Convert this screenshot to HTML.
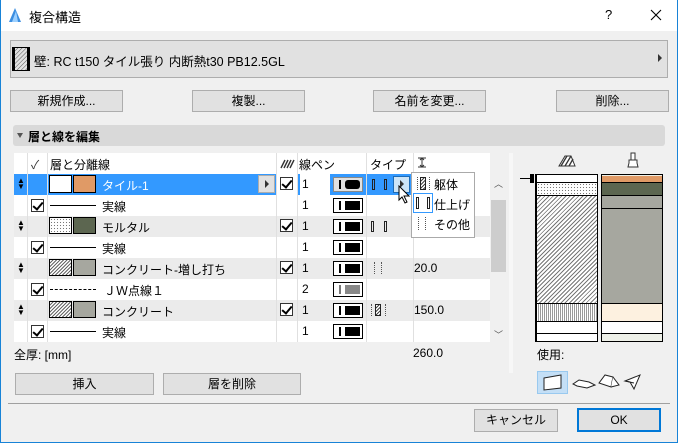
<!DOCTYPE html>
<html><head><meta charset="utf-8"><style>
*{box-sizing:border-box;margin:0;padding:0}
body{width:678px;height:443px;overflow:hidden;background:#f0f0f0;font-family:"Liberation Sans","Noto Sans CJK JP",sans-serif;font-size:12px;color:#000;position:relative}
.a{position:absolute}
.btn{position:absolute;background:#e1e1e1;border:1px solid #adadad;text-align:center;line-height:20px;font-size:12px}
.row{position:absolute;left:14px;width:476px;height:21px}
.g{background:#ebebeb}.w{background:#fff}
.cb{position:absolute;width:13px;height:13px;border:1px solid #333;background:#fff}
.cb::after{content:"";position:absolute;left:3px;top:0px;width:4px;height:8px;border:solid #000;border-width:0 2px 2px 0;transform:rotate(40deg)}
.sw{position:absolute;width:30px;height:15px;border:1px solid #000;background:#fff}
.sw i{position:absolute;left:5px;top:2px;width:2px;height:9px;background:#000}
.sw b{position:absolute;left:11px;top:2px;width:15px;height:9px;background:#000}
.t{position:absolute;top:3px}
.pat{position:absolute;width:23px;height:17px;border:1px solid #000}
.col{position:absolute;width:23px;height:17px;border:1px solid #000}
.mv{position:absolute;left:4px;top:4px;font-size:8px;line-height:6px}
</style></head><body>
<div class="a" style="left:0;top:0;width:678px;height:443px;border:1px solid #1883d7;border-top:none"></div>
<div class="a" style="left:1px;top:0;width:676px;height:31px;background:#fff"></div>
<svg class="a" style="left:8px;top:7px" width="14" height="16"><path d="M1 15 L7 1 L13 15 Z" fill="#3c8ee0"/><path d="M4 15 L8 4 L10 15Z" fill="#9cd0ff"/></svg>
<div class="a" style="left:29px;top:7px;font-size:13px">複合構造</div>
<div class="a" style="left:605px;top:7px;font-size:13px">?</div>
<svg class="a" style="left:650px;top:9px" width="12" height="12"><path d="M1 1L11 11M11 1L1 11" stroke="#000" stroke-width="1.1"/></svg>

<div class="a" style="left:10px;top:40px;width:658px;height:38px;background:#e1e1e1;border:1px solid #adadad"></div>
<svg class="a" style="left:11px;top:46px" width="20" height="26"><defs><pattern id="h" width="3" height="3" patternUnits="userSpaceOnUse" patternTransform="rotate(45)"><line x1="0" y1="0" x2="0" y2="3" stroke="#555" stroke-width="1"/></pattern></defs><rect x="1.5" y="1.5" width="17" height="23" fill="url(#h)" stroke="#000" stroke-width="1"/><rect x="1" y="1" width="3" height="24" fill="#000"/><rect x="16" y="1" width="3" height="24" fill="#000"/></svg>
<div class="a" style="left:34px;top:51px;font-size:12.5px">壁: RC t150 タイル張り 内断熱t30 PB12.5GL</div>
<div class="a" style="left:658px;top:54px;border-left:4px solid #333;border-top:4px solid transparent;border-bottom:4px solid transparent"></div>

<div class="btn" style="left:10px;top:90px;width:113px;height:22px">新規作成...</div>
<div class="btn" style="left:192px;top:90px;width:113px;height:22px">複製...</div>
<div class="btn" style="left:373px;top:90px;width:113px;height:22px">名前を変更...</div>
<div class="btn" style="left:556px;top:90px;width:113px;height:22px">削除...</div>

<div class="a" style="left:13px;top:125px;width:652px;height:21px;background:#d9d9d9;border-radius:3px"></div>
<div class="a" style="left:17px;top:133px;border-top:5px solid #555;border-left:3px solid transparent;border-right:3px solid transparent"></div>
<div class="a" style="left:28px;top:128px;font-weight:bold;font-size:12px">層と線を編集</div>

<div class="a" style="left:14px;top:153px;width:476px;height:21px;background:#fff"></div>
<div class="a" style="left:31px;top:156px;color:#333">✓</div>
<div class="a" style="left:50px;top:156px">層と分離線</div>
<svg class="a" style="left:280px;top:159px" width="15" height="10"><path d="M1 9L5 1M4 9L8 1M7 9L11 1M10 9L14 1" stroke="#333" stroke-width="1.4"/></svg>
<div class="a" style="left:299px;top:156px">線ペン</div>
<div class="a" style="left:370px;top:156px">タイプ</div>
<svg class="a" style="left:418px;top:157px" width="8" height="11"><path d="M0 1H8M0 10H8M4 1V10M2 3L4 1L6 3M2 8L4 10L6 8" stroke="#333" fill="none"/></svg>

<div class="row g" style="top:174px;background:#fff"></div>
<div class="a" style="left:14px;top:174px;width:262px;height:21px;background:#3399ff"></div>
<div class="a" style="left:298px;top:174px;width:2px;height:21px;background:#3399ff"></div>
<div class="a" style="left:330px;top:174px;width:83px;height:21px;background:#3399ff"></div>
<div class="row w" style="top:195px"></div>
<div class="row g" style="top:216px"></div>
<div class="row w" style="top:237px"></div>
<div class="row g" style="top:258px"></div>
<div class="row w" style="top:279px"></div>
<div class="row g" style="top:300px"></div>
<div class="row w" style="top:321px"></div>
<div class="a" style="left:27px;top:153px;width:1px;height:189px;background:#e0e0e0"></div>
<div class="a" style="left:47px;top:153px;width:1px;height:189px;background:#e0e0e0"></div>
<div class="a" style="left:276px;top:153px;width:1px;height:189px;background:#e0e0e0"></div>
<div class="a" style="left:297px;top:153px;width:1px;height:189px;background:#e0e0e0"></div>
<div class="a" style="left:366px;top:153px;width:1px;height:189px;background:#e0e0e0"></div>
<div class="a" style="left:413px;top:153px;width:1px;height:189px;background:#e0e0e0"></div>

<div class="mv" style="left:17px;top:178px;color:#000">▲<br>▼</div>
<div class="a" style="left:49px;top:175px;width:23px;height:18px;background:#fff;border:1px solid #000"></div>
<div class="col" style="left:73px;top:175px;height:18px;background:#e09a66"></div>
<div class="a" style="left:102px;top:177px;color:#fff">タイル-1</div>
<div class="a" style="left:258px;top:175px;width:17px;height:18px;background:#e1e1e1;border:1px solid #adadad"></div>
<div class="a" style="left:265px;top:180px;border-left:4px solid #333;border-top:4px solid transparent;border-bottom:4px solid transparent"></div>
<div class="cb" style="left:280px;top:177px"></div>
<div class="t" style="left:302px;top:177px">1</div>
<div class="sw" style="left:333px;top:177px;background:#e1e1e1;border-color:#888"><i></i><b style="border-radius:3px"></b></div>
<div class="a" style="left:372px;top:179px;width:3px;height:11px;border:1px solid #222"></div>
<div class="a" style="left:384px;top:179px;width:3px;height:11px;border:1px solid #222"></div>
<div class="a" style="left:393px;top:176px;width:17px;height:17px;background:#cce4f7;border:1px solid #1d6bb5"></div>
<div class="a" style="left:400px;top:180px;border-left:4px solid #333;border-top:4px solid transparent;border-bottom:4px solid transparent"></div>
<svg class="a" style="left:398px;top:185px" width="13" height="19"><path d="M1 1L1 15L4 12L7 18L9 17L6 11L11 11Z" fill="#fff" stroke="#000" stroke-width="1"/></svg>

<div class="cb" style="left:31px;top:199px"></div>
<div class="a" style="left:50px;top:205px;width:46px;height:1px;background:#000"></div>
<div class="t" style="left:102px;top:198px">実線</div>
<div class="t" style="left:302px;top:198px">1</div>
<div class="sw" style="left:333px;top:198px"><i></i><b></b></div>
<div class="mv" style="left:17px;top:220px">▲<br>▼</div>
<div class="pat" style="left:49px;top:217px;background:#fff radial-gradient(#777 0.6px,transparent 0.8px) 0 0/3px 3px"></div>
<div class="col" style="left:73px;top:217px;background:#5c6650"></div>
<div class="t" style="left:102px;top:219px">モルタル</div>
<div class="cb" style="left:280px;top:219px"></div>
<div class="t" style="left:302px;top:219px">1</div>
<div class="sw" style="left:333px;top:219px"><i></i><b></b></div>
<div class="a" style="left:371px;top:221px;width:3px;height:11px;border:1px solid #222"></div>
<div class="a" style="left:384px;top:221px;width:3px;height:11px;border:1px solid #222"></div>
<div class="cb" style="left:31px;top:241px"></div>
<div class="a" style="left:50px;top:247px;width:46px;height:1px;background:#000"></div>
<div class="t" style="left:102px;top:240px">実線</div>
<div class="t" style="left:302px;top:240px">1</div>
<div class="sw" style="left:333px;top:240px"><i></i><b></b></div>
<div class="mv" style="left:17px;top:262px">▲<br>▼</div>
<div class="pat" style="left:49px;top:259px;background:repeating-linear-gradient(135deg,#fff 0 1.5px,#666 1.5px 2.5px)"></div>
<div class="col" style="left:73px;top:259px;background:#a6a79f"></div>
<div class="t" style="left:102px;top:261px">コンクリート-増し打ち</div>
<div class="cb" style="left:280px;top:261px"></div>
<div class="t" style="left:302px;top:261px">1</div>
<div class="sw" style="left:333px;top:261px"><i></i><b></b></div>
<div class="a" style="left:374px;top:262px;width:1px;height:12px;border-left:1px dotted #555"></div>
<div class="a" style="left:381px;top:262px;width:1px;height:12px;border-left:1px dotted #555"></div>
<div class="t" style="left:414px;top:261px">20.0</div>
<div class="cb" style="left:31px;top:283px"></div>
<div class="a" style="left:50px;top:289px;width:46px;height:1px;border-top:1px dashed #000"></div>
<div class="t" style="left:104px;top:282px">ＪＷ点線１</div>
<div class="t" style="left:302px;top:282px">2</div>
<div class="sw" style="left:333px;top:282px"><i style="background:#777"></i><b style="background:#888"></b></div>
<div class="mv" style="left:17px;top:304px">▲<br>▼</div>
<div class="pat" style="left:49px;top:301px;background:repeating-linear-gradient(135deg,#fff 0 1.5px,#666 1.5px 2.5px)"></div>
<div class="col" style="left:73px;top:301px;background:#a6a79f"></div>
<div class="t" style="left:102px;top:303px">コンクリート</div>
<div class="cb" style="left:280px;top:303px"></div>
<div class="t" style="left:302px;top:303px">1</div>
<div class="sw" style="left:333px;top:303px"><i></i><b></b></div>
<div class="a" style="left:371px;top:304px;width:1px;height:12px;border-left:1px dotted #555"></div>
<div class="a" style="left:375px;top:304px;width:6px;height:12px;border:1px solid #222;background:repeating-linear-gradient(135deg,#fff 0 1.5px,#444 1.5px 2.5px)"></div>
<div class="a" style="left:385px;top:304px;width:1px;height:12px;border-left:1px dotted #555"></div>
<div class="t" style="left:414px;top:303px">150.0</div>
<div class="cb" style="left:31px;top:325px"></div>
<div class="a" style="left:50px;top:331px;width:46px;height:1px;background:#000"></div>
<div class="t" style="left:102px;top:324px">実線</div>
<div class="t" style="left:302px;top:324px">1</div>
<div class="sw" style="left:333px;top:324px"><i></i><b></b></div>

<div class="a" style="left:490px;top:174px;width:16px;height:168px;background:#f0f0f0"></div>
<div class="a" style="left:494px;top:177px;font-size:9px;color:#555">︿</div>
<div class="a" style="left:491px;top:200px;width:15px;height:72px;background:#cdcdcd"></div>
<div class="a" style="left:494px;top:328px;font-size:9px;color:#555">﹀</div>

<div class="a" style="left:411px;top:172px;width:64px;height:66px;background:#fff;border:1px solid #aaa"></div>
<div class="a" style="left:417px;top:177px;width:1px;height:13px;border-left:1px dotted #555"></div>
<div class="a" style="left:420px;top:177px;width:6px;height:13px;border:1px solid #222;background:repeating-linear-gradient(135deg,#fff 0 1.5px,#444 1.5px 2.5px)"></div>
<div class="a" style="left:429px;top:177px;width:1px;height:13px;border-left:1px dotted #555"></div>
<div class="a" style="left:434px;top:176px">躯体</div>
<div class="a" style="left:413px;top:193px;width:20px;height:20px;border:1px solid #3399ff"></div>
<div class="a" style="left:416px;top:197px;width:3px;height:12px;border:1px solid #222"></div>
<div class="a" style="left:427px;top:197px;width:3px;height:12px;border:1px solid #222"></div>
<div class="a" style="left:434px;top:196px">仕上げ</div>
<div class="a" style="left:418px;top:217px;width:1px;height:13px;border-left:1px dotted #555"></div>
<div class="a" style="left:425px;top:217px;width:1px;height:13px;border-left:1px dotted #555"></div>
<div class="a" style="left:434px;top:216px">その他</div>

<div class="a" style="left:509px;top:153px;width:4px;height:220px;background:#f7f7f7"></div>
<svg class="a" style="left:558px;top:155px" width="18" height="12"><path d="M1 11L7 1H13L17 11Z" fill="#fff" stroke="#333"/><path d="M3 11L9 1M7 11L13 1M11 11L15 4" stroke="#333" stroke-width="1.3"/></svg>
<svg class="a" style="left:627px;top:152px" width="12" height="16"><rect x="4" y="1" width="4" height="7" fill="#fff" stroke="#333"/><path d="M2 8H10V11L11 15H1L2 11Z" fill="#fff" stroke="#333"/></svg>
<div class="a" style="left:520px;top:178px;width:12px;height:1px;background:#000"></div>
<div class="a" style="left:530px;top:174px;width:4px;height:9px;background:#000"></div>
<div class="a" style="left:535px;top:174px;width:2px;height:168px;background:#000"></div>
<div class="a" style="left:535px;top:174px;width:63px;height:168px;border:1px solid #000;border-left-width:2px;background:#fff">
 <div class="a" style="left:0;top:7px;width:60px;height:1px;background:#000"></div>
 <div class="a" style="left:0;top:8px;width:60px;height:12px;background:radial-gradient(#777 0.6px,transparent 0.8px) 0 0/3px 3px"></div>
 <div class="a" style="left:0;top:20px;width:60px;height:1px;background:#000"></div>
 <div class="a" style="left:0;top:21px;width:60px;height:107px;background:repeating-linear-gradient(135deg,#fff 0 2px,#777 2px 3px)"></div>
 <div class="a" style="left:0;top:128px;width:60px;height:1px;background:#000"></div>
 <div class="a" style="left:0;top:129px;width:60px;height:17px;background:repeating-linear-gradient(90deg,#fff 0 1px,#999 1px 2px)"></div>
 <div class="a" style="left:0;top:146px;width:60px;height:1px;background:#000"></div>
 <div class="a" style="left:0;top:158px;width:60px;height:1px;background:#000"></div>
</div>
<div class="a" style="left:601px;top:174px;width:62px;height:168px;border:1px solid #000;background:#eef0e8">
 <div class="a" style="left:0;top:1px;width:60px;height:6px;background:#e09a66"></div>
 <div class="a" style="left:0;top:7px;width:60px;height:1px;background:#000"></div>
 <div class="a" style="left:0;top:8px;width:60px;height:12px;background:#5c6650"></div>
 <div class="a" style="left:0;top:20px;width:60px;height:1px;background:#000"></div>
 <div class="a" style="left:0;top:21px;width:60px;height:107px;background:#a6a79f"></div>
 <div class="a" style="left:0;top:33px;width:60px;height:1px;background:#000"></div>
 <div class="a" style="left:0;top:128px;width:60px;height:1px;background:#000"></div>
 <div class="a" style="left:0;top:129px;width:60px;height:17px;background:#fdf1e0"></div>
 <div class="a" style="left:0;top:146px;width:60px;height:1px;background:#000"></div>
 <div class="a" style="left:0;top:147px;width:60px;height:11px;background:#fff"></div>
 <div class="a" style="left:0;top:158px;width:60px;height:1px;background:#000"></div>
</div>

<div class="a" style="left:14px;top:346px">全厚: [mm]</div>
<div class="a" style="left:413px;top:346px">260.0</div>
<div class="a" style="left:537px;top:346px">使用:</div>
<div class="btn" style="left:15px;top:373px;width:139px;height:22px">挿入</div>
<div class="btn" style="left:163px;top:373px;width:138px;height:22px">層を削除</div>
<div class="a" style="left:537px;top:371px;width:31px;height:23px;background:#c4dff6;border:1px solid #99c9ef"></div>
<svg class="a" style="left:537px;top:371px" width="130" height="23"><path d="M7 7L24 4V17L7 19Z" fill="#fff" stroke="#222"/><path d="M36 13L42 9L52 11L58 14L50 17L40 15Z" fill="#fff" stroke="#222"/><path d="M62 12L68 4L76 6L74 16Z" fill="#fff" stroke="#222"/><path d="M76 6L82 14L74 16" fill="#fff" stroke="#222"/><path d="M88 10L103 4L97 18L93 11Z" fill="#fff" stroke="#222"/><path d="M88 10L97 12" stroke="#222"/></svg>
<div class="a" style="left:8px;top:403px;width:662px;height:1px;background:#a0a0a0"></div>
<div class="btn" style="left:474px;top:409px;width:84px;height:23px;line-height:21px">キャンセル</div>
<div class="btn" style="left:577px;top:408px;width:84px;height:24px;border:2px solid #0078d7;line-height:20px">OK</div>
</body></html>
